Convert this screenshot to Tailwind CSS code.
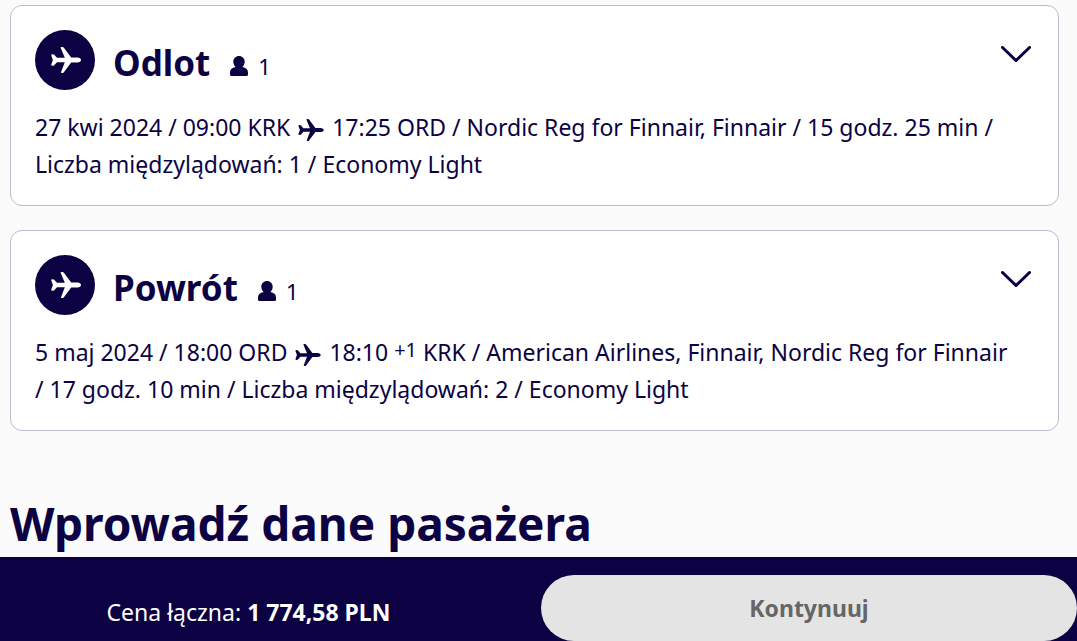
<!DOCTYPE html>
<html lang="pl">
<head>
    <meta charset="UTF-8">
    <meta name="viewport" content="width=device-width, initial-scale=1.0">
    <title>Dane pasażera</title>
    <script src="https://cdn.jsdelivr.net/npm/@tailwindcss/browser@4"></script>
</head>
<body class="bg-[#fbfbfc] text-[#0c0243] font-['Noto_Sans','Open_Sans',sans-serif]">
    <!-- Shared icons -->
    <svg class="hidden">
        <symbol id="plane" viewBox="0 0 30 26">
            <path d="M9.5.6Q9.8 0 10.6 0H11.6Q12.2 0 12.7.6L20.2 10.6H26.5C28.6 10.6 30 11.8 30 13S28.6 15.4 26.5 15.4H20.2L12.7 25.4Q12.2 26 11.6 26H10.6Q9.8 26 10 25.2L13.8 15.2H6L3.2 18.3Q2.6 18.9 1.8 18.8L.6 18.6Q0 18.4.2 17.7L1.9 13 .2 8.3Q0 7.6.6 7.4L1.8 7.2Q2.6 7.1 3.2 7.7L6 10.8H13.8Z"/>
        </symbol>
        <symbol id="person" viewBox="0 0 18 20">
            <path d="M9 0C12.2 0 14.7 2.5 14.7 5.7 14.7 7.8 13.7 9.8 12.4 11 15.8 11.5 18 13.4 18 16.4V18.4Q18 20 16.4 20H1.6Q0 20 0 18.4V16.4C0 13.4 2.2 11.5 5.6 11 4.3 9.8 3.3 7.8 3.3 5.7 3.3 2.5 5.8 0 9 0Z"/>
        </symbol>
    </svg>

    <main class="px-[10px] pt-[5px] pb-24 mr-2">
        <!-- Outbound flight -->
        <section class="bg-white border border-[#bdb9cf] rounded-xl px-6 pt-6 pb-[22px] mb-6">
            <div class="flex items-start justify-between">
                <div class="flex items-center">
                    <span class="w-[60px] h-[60px] rounded-full bg-[#0c0243] flex items-center justify-center">
                        <svg class="w-[30px] h-[26px] ml-[2px] fill-white"><use href="#plane"/></svg>
                    </span>
                    <h2 class="ml-[18px] mt-[6px] text-[35px] leading-[48px] font-bold">Odlot</h2>
                    <span class="ml-5 mt-3 flex items-center gap-[10px] text-[22px] leading-6">
                        <svg class="w-[18px] h-5 fill-[#0c0243]"><use href="#person"/></svg>1
                    </span>
                </div>
                <button aria-label="Rozwiń" class="mt-4 mr-[3px]">
                    <svg class="block w-[30px] h-4" viewBox="0 0 30 16" fill="none" stroke="#0c0243" stroke-width="3" stroke-linecap="round"><path d="M1.5 1.5 15 14.5 28.5 1.5"/></svg>
                </button>
            </div>
            <p class="mt-[19px] mr-5 text-[23px] leading-[37px]">27 kwi 2024 / 09:00 KRK <svg class="inline align-middle w-[26px] h-[22px] mx-[2px] fill-[#0c0243]"><use href="#plane"/></svg> 17:25 ORD / Nordic Reg for Finnair, Finnair / 15 godz. 25 min / Liczba międzylądowań: 1 / Economy Light</p>
        </section>

        <!-- Return flight -->
        <section class="bg-white border border-[#bdb9cf] rounded-xl px-6 pt-6 pb-[22px]">
            <div class="flex items-start justify-between">
                <div class="flex items-center">
                    <span class="w-[60px] h-[60px] rounded-full bg-[#0c0243] flex items-center justify-center">
                        <svg class="w-[30px] h-[26px] ml-[2px] fill-white"><use href="#plane"/></svg>
                    </span>
                    <h2 class="ml-[18px] mt-[6px] text-[35px] leading-[48px] font-bold">Powrót</h2>
                    <span class="ml-5 mt-3 flex items-center gap-[10px] text-[22px] leading-6">
                        <svg class="w-[18px] h-5 fill-[#0c0243]"><use href="#person"/></svg>1
                    </span>
                </div>
                <button aria-label="Rozwiń" class="mt-4 mr-[3px]">
                    <svg class="block w-[30px] h-4" viewBox="0 0 30 16" fill="none" stroke="#0c0243" stroke-width="3" stroke-linecap="round"><path d="M1.5 1.5 15 14.5 28.5 1.5"/></svg>
                </button>
            </div>
            <p class="mt-[19px] mr-5 text-[23px] leading-[37px]">5 maj 2024 / 18:00 ORD <svg class="inline align-middle w-[26px] h-[22px] mx-[2px] fill-[#0c0243]"><use href="#plane"/></svg> 18:10 <span class="inline-block text-[20px] leading-6 align-[4px]">+1</span> KRK / American Airlines, Finnair, Nordic Reg for Finnair / 17 godz. 10 min / Liczba międzylądowań: 2 / Economy Light</p>
        </section>

        <h1 class="mt-[62px] text-[46px] leading-[60px] font-bold">Wprowadź dane pasażera</h1>
    </main>

    <!-- Price bar -->
    <footer class="fixed bottom-0 inset-x-0 bg-[#0c0243] text-white flex pt-[18px]">
        <p class="flex-1 pr-11 pt-2 text-center text-[23px] leading-[58px]">Cena łączna: <b>1 774,58 PLN</b></p>
        <button class="w-[536px] h-[66px] rounded-full bg-[#e4e4e4] text-[#666] text-[23px] font-bold" disabled>Kontynuuj</button>
    </footer>
</body>
</html>
